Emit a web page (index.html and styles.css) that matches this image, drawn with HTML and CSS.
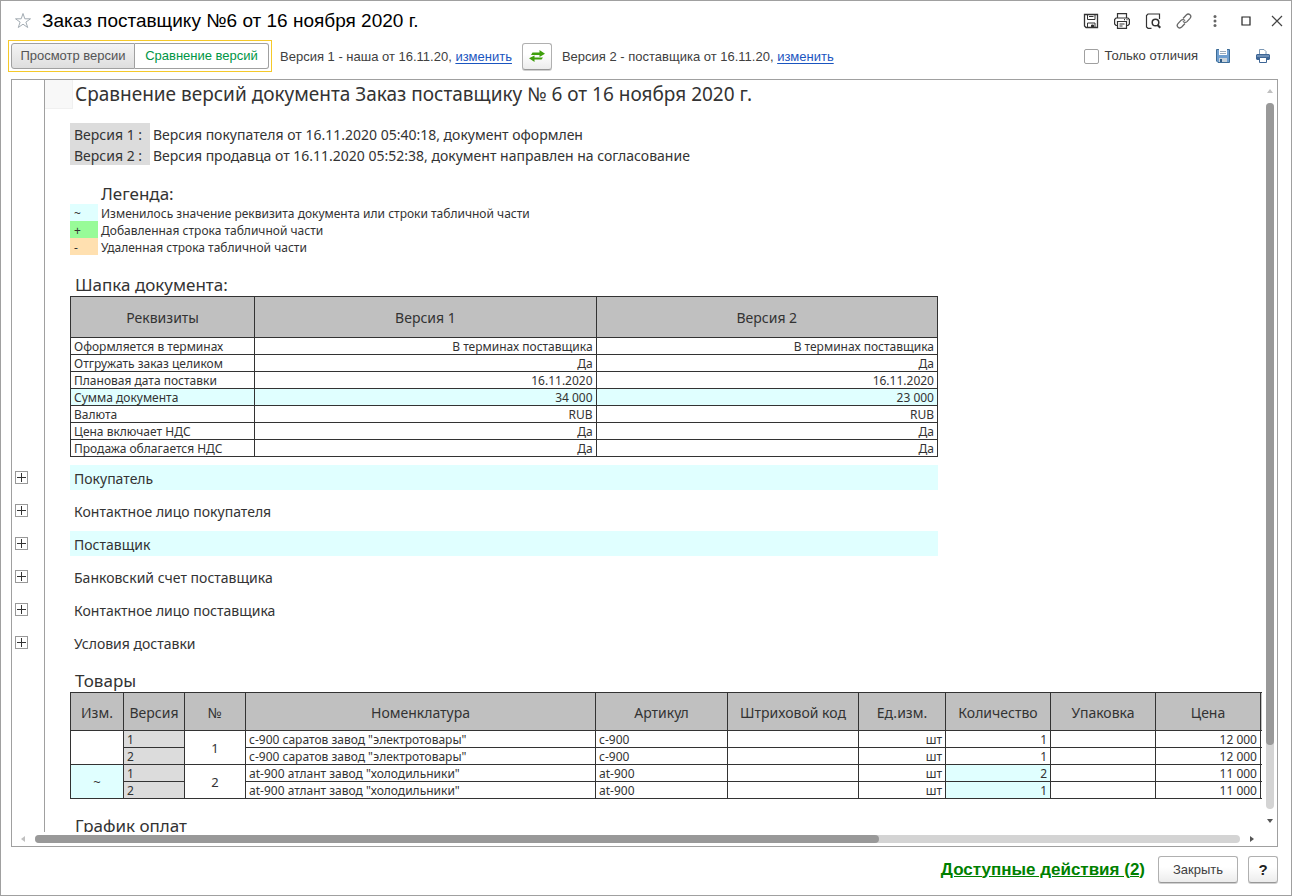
FILE: index.html
```html
<!DOCTYPE html>
<html lang="ru">
<head>
<meta charset="utf-8">
<title>Заказ поставщику №6 от 16 ноября 2020 г.</title>
<link rel="stylesheet" href="styles.css">
</head>
<body>
<div class="window">
  <header class="titlebar">
    <button class="icon-btn star" type="button" aria-label="В избранное"><svg width="18" height="18" viewBox="0 0 18 18"><path d="M9 1.5l1.8 5.3h5.7l-4.6 3.3 1.8 5.4L9 12.200l-4.700 3.300 1.800-5.400L1.500 6.800h5.700z" fill="none" stroke="#a3acb3"/></svg></button>
    <h1 class="title">Заказ поставщику №6 от 16 ноября 2020 г.</h1>
    <div class="title-tools">
      <button class="icon-btn" type="button" aria-label="Сохранить"><svg width="16" height="16" viewBox="0 0 16 16" fill="none" stroke="#333"><path d="M1.500 1.500h13v13h-11.500l-1.500-1.500z" stroke-width="1.300"/><path d="M4.500 1.500v5h7.500v-5M6 3.500h4.500M4.500 14.500v-4.500h7.500v4.500"/><path d="M8.500 12h2v2h-2z" fill="#222"/></svg></button>
      <button class="icon-btn" type="button" aria-label="Печать"><svg width="16" height="16" viewBox="0 0 16 16" fill="none" stroke="#333" stroke-width="1.200"><path d="M3.500 5V.6h9V5M3.500 12.500H2L.6 11V6.500L2 5h12l1.400 1.500V11L14 12.500h-1.500M3.500 8.500h9v6.900h-9zM5.500 11h5M5.500 13h3M10 6.700h1M12.500 6.700h1"/></svg></button>
      <button class="icon-btn" type="button" aria-label="Просмотр"><svg width="16" height="16" viewBox="0 0 16 16" fill="none" stroke="#333" stroke-width="1.200"><path d="M6.500 15.300H3L1.500 14V2.500L3 1h11.500V6"/><circle cx="10.500" cy="9.500" r="3.300" stroke-width="1.500"/><path d="M12.500 12l2.800 2.800" stroke-width="2"/></svg></button>
      <button class="icon-btn" type="button" aria-label="Ссылка"><svg width="16" height="16" viewBox="0 0 16 16" fill="none" stroke="#666" stroke-width="1.300"><path d="M7 5.500l3.300-3.500c2.500-2.400 6 .8 3.700 3.400l-3 3.200c-1.300 1.300-3.200.9-4-.2M9 10.500L5.700 14c-2.500 2.400-6-.8-3.700-3.400l3-3.200c1.300-1.300 3.200-.9 4 .2"/></svg></button>
      <button class="icon-btn" type="button" aria-label="Ещё"><svg width="16" height="16" viewBox="0 0 16 16" fill="#666"><circle cx="8" cy="3.500" r="1.500"/><circle cx="8" cy="8" r="1.500"/><circle cx="8" cy="12.500" r="1.500"/></svg></button>
      <button class="icon-btn" type="button" aria-label="Развернуть"><svg width="16" height="16" viewBox="0 0 16 16"><path d="M4 4h8v8H4z" fill="none" stroke="#222" stroke-width="1.200"/></svg></button>
      <button class="icon-btn" type="button" aria-label="Закрыть окно"><svg width="16" height="16" viewBox="0 0 16 16"><path d="M3 3l10 10M13 3L3 13" stroke="#444" stroke-width="1.200"/></svg></button>
    </div>
  </header>

  <div class="toolbar">
    <div class="switch">
      <button class="switch-btn" type="button">Просмотр версии</button>
      <button class="switch-btn active" type="button">Сравнение версий</button>
    </div>
    <span class="version-info">Версия 1 - наша от 16.11.20, <a href="#v1">изменить</a></span>
    <button class="btn swap" type="button" aria-label="Поменять местами"><svg width="16" height="12" viewBox="0 0 16 12" fill="#3f9f0c"><path d="M3.500 2.500H10.500V0L16 3.800 10.500 7V5H2z"/><path d="M12.500 9.500H5.500V12L0 8.200 5.500 5.500V7.500H14z"/></svg></button>
    <span class="version-info">Версия 2 - поставщика от 16.11.20, <a href="#v2">изменить</a></span>
    <div class="toolbar-end">
      <label class="check"><input type="checkbox"> Только отличия</label>
      <button class="icon-btn" type="button" aria-label="Сохранить таблицу"><svg width="14" height="14" viewBox="0 0 14 14"><path d="M.5.500h13v13H2L.5 12z" fill="#6f9fd0" stroke="#3d6c96"/><path d="M3 0h8v6H3z" fill="#fff"/><path d="M4 2.500h6M4 4.500h6" stroke="#9ab"/><path d="M3 9h8v4H3z" fill="#c9d3db"/><path d="M4 10h2v3H4z" fill="#2f5a85"/></svg></button>
      <button class="icon-btn" type="button" aria-label="Печать таблицы"><svg width="14" height="14" viewBox="0 0 14 14"><path d="M3.500.5h4.500l2 2V6h-6.500z" fill="#fff" stroke="#7c98b5"/><path d="M1 5h12l1 1v4l-1 1H1l-1-1V6z" fill="#3d6595"/><path d="M1 7h12" stroke="#9db8d6"/><path d="M3.500 8.500h7v5h-7z" fill="#fff" stroke="#3d6595"/></svg></button>
    </div>
  </div>

  <main class="viewer">
    <div class="sheet">
      <div class="row"><div class="gutter"></div><div class="corner"></div><h2 class="doc-title">Сравнение версий документа Заказ поставщику № 6 от 16 ноября 2020 г.</h2></div>
      <div class="row"><div class="gutter"></div>
        <dl class="versions">
          <dt>Версия 1 :</dt><dd>Версия покупателя от 16.11.2020 05:40:18, документ оформлен</dd>
          <dt>Версия 2 :</dt><dd>Версия продавца от 16.11.2020 05:52:38, документ направлен на согласование</dd>
        </dl>
      </div>
      <div class="row"><div class="gutter"></div>
        <div class="legend">
          <h3 class="legend-title">Легенда:</h3>
          <dl class="legend-list">
            <dt class="changed">~</dt><dd>Изменилось значение реквизита документа или строки табличной части</dd>
            <dt class="added">+</dt><dd>Добавленная строка табличной части</dd>
            <dt class="removed">-</dt><dd>Удаленная строка табличной части</dd>
          </dl>
        </div>
      </div>
      <div class="row"><div class="gutter"></div>
        <section class="block">
          <h3 class="block-title">Шапка документа:</h3>
          <table class="grid head-grid">
            <colgroup><col class="c-prop"><col class="c-ver"><col class="c-ver"></colgroup>
            <thead><tr><th>Реквизиты</th><th>Версия 1</th><th>Версия 2</th></tr></thead>
            <tbody>
              <tr><td>Оформляется в терминах</td><td class="num">В терминах поставщика</td><td class="num">В терминах поставщика</td></tr>
              <tr><td>Отгружать заказ целиком</td><td class="num">Да</td><td class="num">Да</td></tr>
              <tr><td>Плановая дата поставки</td><td class="num">16.11.2020</td><td class="num">16.11.2020</td></tr>
              <tr class="changed"><td>Сумма документа</td><td class="num">34 000</td><td class="num">23 000</td></tr>
              <tr><td>Валюта</td><td class="num">RUB</td><td class="num">RUB</td></tr>
              <tr><td>Цена включает НДС</td><td class="num">Да</td><td class="num">Да</td></tr>
              <tr><td>Продажа облагается НДС</td><td class="num">Да</td><td class="num">Да</td></tr>
            </tbody>
          </table>
        </section>
      </div>
      <div class="row"><div class="gutter"><button class="expand" type="button" aria-label="Развернуть: Покупатель"></button></div><div class="group changed">Покупатель</div></div>
      <div class="row"><div class="gutter"><button class="expand" type="button" aria-label="Развернуть: Контактное лицо покупателя"></button></div><div class="group">Контактное лицо покупателя</div></div>
      <div class="row"><div class="gutter"><button class="expand" type="button" aria-label="Развернуть: Поставщик"></button></div><div class="group changed">Поставщик</div></div>
      <div class="row"><div class="gutter"><button class="expand" type="button" aria-label="Развернуть: Банковский счет поставщика"></button></div><div class="group">Банковский счет поставщика</div></div>
      <div class="row"><div class="gutter"><button class="expand" type="button" aria-label="Развернуть: Контактное лицо поставщика"></button></div><div class="group">Контактное лицо поставщика</div></div>
      <div class="row"><div class="gutter"><button class="expand" type="button" aria-label="Развернуть: Условия доставки"></button></div><div class="group">Условия доставки</div></div>
      <div class="row"><div class="gutter"></div>
        <section class="block">
          <h3 class="block-title">Товары</h3>
          <table class="grid goods">
            <colgroup><col class="c-mark"><col class="c-no"><col class="c-no"><col class="c-name"><col class="c-art"><col class="c-code"><col class="c-unit"><col class="c-qty"><col class="c-qty"><col class="c-qty"><col class="c-qty"></colgroup>
            <thead><tr><th>Изм.</th><th>Версия</th><th>№</th><th>Номенклатура</th><th>Артикул</th><th>Штриховой код</th><th>Ед.изм.</th><th>Количество</th><th>Упаковка</th><th>Цена</th><th></th></tr></thead>
            <tbody>
              <tr><td class="mid" rowspan="2"></td><td class="ver">1</td><td class="mid" rowspan="2">1</td><td>с-900 саратов завод "электротовары"</td><td>с-900</td><td></td><td class="num">шт</td><td class="num">1</td><td></td><td class="num">12 000</td><td></td></tr>
              <tr><td class="ver">2</td><td>с-900 саратов завод "электротовары"</td><td>с-900</td><td></td><td class="num">шт</td><td class="num">1</td><td></td><td class="num">12 000</td><td></td></tr>
              <tr><td class="mid changed" rowspan="2">~</td><td class="ver">1</td><td class="mid" rowspan="2">2</td><td>at-900 атлант завод "холодильники"</td><td>at-900</td><td></td><td class="num">шт</td><td class="num changed">2</td><td></td><td class="num">11 000</td><td></td></tr>
              <tr><td class="ver">2</td><td>at-900 атлант завод "холодильники"</td><td>at-900</td><td></td><td class="num">шт</td><td class="num changed">1</td><td></td><td class="num">11 000</td><td></td></tr>
            </tbody>
          </table>
        </section>
      </div>
      <div class="row last"><div class="gutter"></div><section class="block"><h3 class="block-title">График оплат</h3></section></div>
    </div>
    <div class="scroll vertical">
      <svg class="arrow" width="6" height="4" viewBox="0 0 6 4"><path d="M3 0l3 4H0z" fill="#c0c0c0"/></svg>
      <div class="track"><div class="thumb"></div></div>
      <svg class="arrow" width="6" height="4" viewBox="0 0 6 4"><path d="M0 0h6L3 4z" fill="#555"/></svg>
    </div>
    <div class="scroll horizontal">
      <svg class="arrow" width="4" height="6" viewBox="0 0 4 6"><path d="M4 0v6L0 3z" fill="#c0c0c0"/></svg>
      <div class="track"><div class="thumb"></div></div>
      <svg class="arrow" width="4" height="6" viewBox="0 0 4 6"><path d="M0 0v6l4-3z" fill="#555"/></svg>
    </div>
  </main>

  <footer class="footer">
    <a class="actions" href="#actions">Доступные действия (2)</a>
    <button class="btn close" type="button">Закрыть</button>
    <button class="btn help" type="button">?</button>
  </footer>
</div>
</body>
</html>
```

FILE: styles.css
```css
* { box-sizing: border-box; }

body {
  margin: 0;
  font: 13px/16px "Liberation Sans", Arial, sans-serif;
  color: #404040;
  background: #fff;
}

button, input { font: inherit; color: inherit; margin: 0; }
h1, h2, h3, dl, dd { margin: 0; font-weight: normal; }
svg { display: block; }

.window {
  display: flex;
  flex-direction: column;
  height: 100vh;
  border: 1px solid #a0a0a0;
}

.icon-btn {
  display: grid;
  place-items: center;
  width: 18px;
  height: 18px;
  padding: 0;
  border: 0;
  background: none;
}

.titlebar {
  display: flex;
  align-items: center;
  gap: 10px;
  height: 39px;
  padding: 0 5px 0 13px;
}
.title { font-size: 19px; line-height: 24px; color: #000; white-space: nowrap; }
.title-tools { display: flex; gap: 13px; margin-left: auto; }

.toolbar {
  display: flex;
  align-items: center;
  height: 32px;
  padding: 0 19px 0 7px;
  white-space: nowrap;
}
.switch {
  display: flex;
  padding: 2px;
  margin-right: 8px;
  border: 1px solid #f5c92a;
}
.switch-btn {
  width: 124px;
  height: 26px;
  padding: 0;
  border: 1px solid #a0a0a0;
  border-radius: 3px 0 0 3px;
  background: linear-gradient(#f4f4f4, #dedede);
  color: #555;
}
.switch-btn.active {
  width: 134px;
  border-left: 0;
  border-radius: 0 3px 3px 0;
  background: #fff;
  color: #009646;
}
.version-info { padding-top: 2px; }
.version-info a { color: #1a55c0; text-underline-offset: 2px; }
.btn {
  display: grid;
  place-items: center;
  height: 27px;
  padding: 0;
  border: 1px solid #b0b0b0;
  border-bottom-color: #989898;
  border-radius: 3px;
  background: linear-gradient(#fff 40%, #ececec);
  box-shadow: 0 1px 0 #d0d0d0;
}
.swap { width: 30px; margin: 0 10px; }
.toolbar-end { display: flex; align-items: center; gap: 22px; margin-left: auto; }
.check { display: flex; align-items: center; gap: 6px; margin-right: -6px; }
.check input {
  appearance: none;
  width: 15px;
  height: 15px;
  border: 1px solid #a0a0a0;
  border-radius: 2px;
  background: #fff;
}

.viewer {
  display: grid;
  grid-template: minmax(0, 1fr) 14px / minmax(0, 1fr) 15px;
  flex: 1;
  min-height: 0;
  margin: 7px 13px 0 10px;
  border: 1px solid #a0a0a0;
}
.sheet {
  display: flex;
  flex-direction: column;
  overflow: hidden;
  font: 12px/16px "Noto Sans", "Open Sans", sans-serif;
  color: #333;
}
.row { display: flex; flex: none; }
.row.last { flex: 1 0 auto; }
.gutter {
  display: flex;
  align-items: center;
  flex: none;
  width: 33px;
  padding-left: 3px;
  border-right: 1px solid #a0a0a0;
}
.corner {
  width: 28px;
  height: 29px;
  border: solid #f0f0f0;
  border-width: 0 1px 1px 0;
  background: #f8f8f8;
}
.doc-title { padding: 0 0 15px 2px; font-size: 19px; line-height: 28px; white-space: nowrap; }

.versions {
  display: grid;
  grid-template-columns: 80px auto;
  margin-left: 25px;
  font-size: 14px;
  line-height: 19px;
  white-space: nowrap;
}
.versions dt { padding: 2px 0 0 4px; background: #dcdcdc; }
.versions dd { padding: 2px 0 0 3px; }

.legend { padding: 19px 0 19px 25px; white-space: nowrap; }
.legend-title { padding-left: 31px; font-size: 17px; line-height: 20px; }
.legend-list { display: grid; grid-template-columns: 28px auto; line-height: 15px; }
.legend-list dt { padding: 2px 0 0 4px; }
.legend-list dd { padding: 2px 0 0 3px; }
.added { background: #98fb98; }
.removed { background: #ffe0b0; }
.changed { background: #e0ffff; }

.block { padding-left: 25px; }
.block-title { padding-left: 5px; font-size: 17px; line-height: 22px; white-space: nowrap; }

.grid { border-collapse: collapse; table-layout: fixed; line-height: 14px; }
.grid th, .grid td { border: 1px solid #333; }
.grid td { height: 17px; padding: 2px 3px 0; text-align: left; white-space: nowrap; }
.grid th { padding: 2px 0 0; background: #c0c0c0; font-size: 14px; font-weight: normal; }
.grid td.num { text-align: right; }
.grid td.mid { padding: 0; text-align: center; font-size: 13px; }
.grid td.ver { background: #dcdcdc; }
.head-grid { width: 868px; margin-bottom: 4px; }
.head-grid th { height: 41px; }
.goods { width: 1296px; }
.goods th { height: 38px; }
.c-prop { width: 184px; }
.c-ver { width: 341px; }
.c-mark { width: 53px; }
.c-no { width: 61px; }
.c-name { width: 350px; }
.c-art { width: 132px; }
.c-code { width: 131px; }
.c-unit { width: 87px; }
.c-qty { width: 105px; }

.expand {
  width: 13px;
  height: 13px;
  padding: 0;
  border: 1px solid #999;
  background:
    linear-gradient(#333, #333) center / 9px 1px no-repeat,
    linear-gradient(#333, #333) center / 1px 9px no-repeat,
    #fff;
}
.group {
  width: 868px;
  margin: 4px 0 4px 25px;
  padding: 4px 4px 1px;
  font-size: 14px;
  line-height: 20px;
}
.row:has(.group) + .row .block { padding-top: 11px; }
.row.last .block { padding-top: 16px; }

.scroll { display: flex; align-items: center; gap: 10px; }
.arrow { flex: none; }
.track { display: flex; flex: 1; border-radius: 4px; background: #d4d4d4; }
.thumb { border-radius: 4px; background: #999; }
.vertical { flex-direction: column; padding: 9px 0; }
.vertical .track { flex-direction: column; width: 8px; }
.vertical .thumb { height: 91%; }
.horizontal { padding: 0 8px 0 9px; }
.horizontal .track { height: 8px; }
.horizontal .thumb { width: 70%; }

.footer {
  display: flex;
  align-items: center;
  justify-content: flex-end;
  height: 48px;
  padding: 0 13px 3px 0;
}
.actions { margin-right: 13px; color: #008000; font-size: 17px; font-weight: bold; }
.close { width: 80px; margin-right: 10px; }
.help { width: 30px; font-size: 15px; font-weight: bold; color: #222; }
```
